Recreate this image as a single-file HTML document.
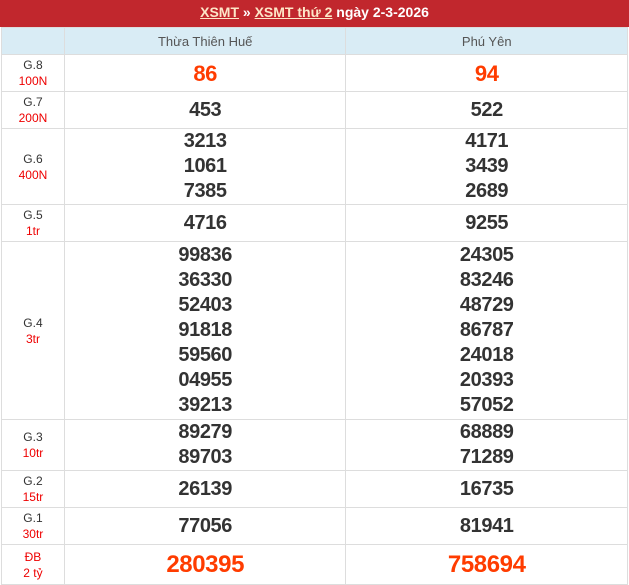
<!DOCTYPE html>
<html><head><meta charset="utf-8"><style>
*{margin:0;padding:0;box-sizing:border-box}
body{width:629px;height:575px;overflow:hidden;background:#fff;font-family:"Liberation Sans",Arial,sans-serif}
.h{height:27px;background:#c1272d;color:#fff;font-weight:bold;font-size:14px;text-align:center;line-height:25px}
.h a{color:#fde6c8;text-decoration:underline}
table{position:absolute;top:27px;left:1px;width:627px;border-collapse:collapse;border:1px solid #999;border-top:none}
td{border:1px solid #ddd;text-align:center;vertical-align:middle;padding:0}
td.l{width:63px;font-size:12px;color:#333;line-height:16px}
td.l span{color:#e00}
tr.hd td{background:#d9ecf5;color:#555;font-size:13px;height:27px}
td.n{width:282px;font-weight:bold;font-size:20px;color:#333;line-height:25px;letter-spacing:-0.4px}
td.n.r{color:#ff3c00;font-size:22px}
td.n.b{color:#ff3c00;font-size:24px}
</style></head><body>
<div class="h"><a>XSMT</a> » <a>XSMT thứ 2</a> ngày 2-3-2026</div>
<table>
<tr class="hd"><td class="l" style="background:#d9ecf5"></td><td>Thừa Thiên Huế</td><td>Phú Yên</td></tr>
<tr style="height:37px"><td class="l">G.8<br><span>100N</span></td><td class="n r">86</td><td class="n r">94</td></tr>
<tr style="height:37px"><td class="l">G.7<br><span>200N</span></td><td class="n">453</td><td class="n">522</td></tr>
<tr style="height:76px"><td class="l">G.6<br><span>400N</span></td><td class="n">3213<br>1061<br>7385</td><td class="n">4171<br>3439<br>2689</td></tr>
<tr style="height:37px"><td class="l">G.5<br><span>1tr</span></td><td class="n">4716</td><td class="n">9255</td></tr>
<tr style="height:178px"><td class="l">G.4<br><span>3tr</span></td><td class="n">99836<br>36330<br>52403<br>91818<br>59560<br>04955<br>39213</td><td class="n">24305<br>83246<br>48729<br>86787<br>24018<br>20393<br>57052</td></tr>
<tr style="height:49px"><td class="l">G.3<br><span>10tr</span></td><td class="n">89279<br>89703</td><td class="n">68889<br>71289</td></tr>
<tr style="height:37px"><td class="l">G.2<br><span>15tr</span></td><td class="n">26139</td><td class="n">16735</td></tr>
<tr style="height:37px"><td class="l">G.1<br><span>30tr</span></td><td class="n">77056</td><td class="n">81941</td></tr>
<tr style="height:40px"><td class="l"><span>ĐB<br>2 tỷ</span></td><td class="n b">280395</td><td class="n b">758694</td></tr>
</table>
</body></html>
